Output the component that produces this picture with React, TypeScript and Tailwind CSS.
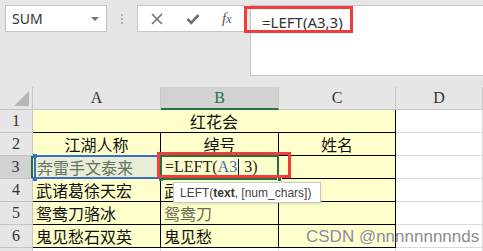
import React from 'react'

const cjk = '"Noto Sans CJK SC", "Noto Sans", sans-serif'
const serif = '"Liberation Serif", serif'

const hdr = 'bg-[#e6e6e6] border-r border-b border-[#c6c6c6] flex items-center justify-center text-[16px] text-[#333]'
const yel = 'bg-[#ffffcc] border-r border-b border-black flex items-center text-[16px] text-[#111]'
const blank = 'bg-white border-r border-b border-[#d9d9d9]'

function RowHead({ n, active }: { n?: number; active?: boolean }) {
  return (
    <div
      className={active
        ? 'bg-[#d2d2d2] border-r-2 border-r-[#217346] border-b border-b-[#c6c6c6] flex items-center justify-center text-[16px] text-[#333]'
        : hdr}
      style={{ fontFamily: serif }}
    >
      {n}
    </div>
  )
}

export default function App() {
  return (
    <div className="w-[483px] h-[251px] overflow-hidden relative bg-[#e6e6e6]" style={{ fontFamily: '"Noto Sans", sans-serif' }}>
      {/* formula bar area */}
      <div className="h-[87px] relative flex items-start pt-[5px] pl-[5px]">
        <div className="w-[102px] h-[27px] bg-white border border-[#c6c6c6] flex items-center justify-between pl-[6px] pr-[7px]">
          <span className="text-[14px] text-[#333]">SUM</span>
          <span className="w-0 h-0 border-l-[4px] border-r-[4px] border-t-[4px] border-l-transparent border-r-transparent border-t-[#777]" />
        </div>
        <div className="w-[30px] h-[27px] flex flex-col items-center justify-center gap-[2px]">
          <span className="w-[2px] h-[2px] bg-[#b0b0b0]" />
          <span className="w-[2px] h-[2px] bg-[#b0b0b0]" />
          <span className="w-[2px] h-[2px] bg-[#b0b0b0]" />
        </div>
        <div className="w-[108px] h-[27px] bg-white border border-[#c6c6c6] flex items-center pl-[12px] gap-[22px]">
          <svg width="14" height="14" viewBox="0 0 14 14">
            <path d="M2 2 L12 12 M12 2 L2 12" stroke="#6f6f6f" strokeWidth="1.6" />
          </svg>
          <svg width="14" height="14" viewBox="0 0 14 14">
            <path d="M1.5 7 L5.2 10.8 L12.5 3" stroke="#6f6f6f" strokeWidth="2.6" fill="none" />
          </svg>
          <span className="text-[15px] italic text-[#555]" style={{ fontFamily: serif }}>
            f<span className="text-[12px]">x</span>
          </span>
        </div>
        <div className="ml-[5px] flex-1 h-[71px] bg-white border-t border-l border-b border-[#c6c6c6] pl-[11px] pt-[4px]">
          <span className="text-[15px] text-[#333]">=LEFT(A3,3)</span>
        </div>
        <div className="absolute left-[244px] top-[6px] w-[109px] h-[27px] border-[3px] border-[#f23b3b]" />
      </div>

      {/* sheet */}
      <div className="grid grid-cols-[33px_128px_118px_117px_87px] auto-rows-[23px]" style={{ fontFamily: serif }}>
        {/* column header */}
        <div className={hdr + ' relative'}>
          <svg className="absolute right-[3px] bottom-[3px]" width="15" height="15" viewBox="0 0 15 15">
            <path d="M15 0 L15 15 L0 15 Z" fill="#b6b6b6" />
          </svg>
        </div>
        <div className={hdr}>A</div>
        <div className="bg-[#d2d2d2] border-r border-r-[#c6c6c6] border-b-2 border-b-[#217346] flex items-center justify-center text-[16px] text-[#217346]">B</div>
        <div className={hdr}>C</div>
        <div className={hdr}>D</div>

        {/* row 1 */}
        <RowHead n={1} />
        <div className={yel + ' col-span-3 justify-center'} style={{ fontFamily: cjk }}>红花会</div>
        <div className={blank} />

        {/* row 2 */}
        <RowHead n={2} />
        <div className={yel + ' justify-center'} style={{ fontFamily: cjk }}>江湖人称</div>
        <div className={yel + ' justify-center'} style={{ fontFamily: cjk }}>绰号</div>
        <div className={yel + ' justify-center'} style={{ fontFamily: cjk }}>姓名</div>
        <div className={blank} />

        {/* row 3 */}
        <RowHead n={3} active />
        <div className="bg-[#e8edd8] border-r border-b border-black flex items-center relative">
          <div className="absolute left-[1px] top-[-1px] right-[-1px] bottom-[-1px] border-2 border-[#3b6fc4]" />
          <span className="absolute left-0 top-[-2px] w-[4px] h-[4px] bg-[#3b6fc4]" />
          <span className="absolute right-[-3px] top-[-2px] w-[4px] h-[4px] bg-[#3b6fc4]" />
          <span className="absolute left-0 bottom-[-3px] w-[4px] h-[4px] bg-[#3b6fc4]" />
          <span className="absolute right-[-3px] bottom-[-3px] w-[4px] h-[4px] bg-[#3b6fc4]" />
          <span className="pl-[4px] text-[16px] text-[#66735f]" style={{ fontFamily: cjk }}>奔雷手文泰来</span>
        </div>
        <div className="bg-[#ffffcc] border-r border-b border-black flex items-center relative">
          <div className="absolute left-[-1px] top-[-1px] right-[-1px] bottom-[-2px] border-2 border-[#217346]" />
          <span className="absolute right-[-4px] bottom-[-4px] w-[5px] h-[5px] bg-[#217346] border border-white" />
          <span className="pl-[4px] text-[16px] text-[#222] flex items-center whitespace-pre">
            =LEFT(<span className="text-[#3b6fc4]">A3</span>
            <span className="inline-block w-px h-[17px] bg-black mx-[1px]" />
            {' 3)'}
          </span>
          <div className="absolute left-[-4px] top-[-4px] w-[134px] h-[26px] border-[3px] border-[#f23b3b]" />
        </div>
        <div className={yel} />
        <div className={blank} />

        {/* row 4 */}
        <RowHead n={4} />
        <div className={yel} style={{ fontFamily: cjk }}><span className="pl-[3px]">武诸葛徐天宏</span></div>
        <div className={yel} style={{ fontFamily: cjk }}><span className="pl-[3px]">武</span></div>
        <div className={yel} />
        <div className={blank} />

        {/* row 5 */}
        <RowHead n={5} />
        <div className={yel} style={{ fontFamily: cjk }}><span className="pl-[3px]">鸳鸯刀骆冰</span></div>
        <div className={yel} style={{ fontFamily: cjk }}><span className="pl-[3px] text-[#6d6d5a]">鸳鸯刀</span></div>
        <div className={yel} />
        <div className={blank} />

        {/* row 6 */}
        <RowHead n={6} />
        <div className={yel} style={{ fontFamily: cjk }}><span className="pl-[3px]">鬼见愁石双英</span></div>
        <div className={yel} style={{ fontFamily: cjk }}><span className="pl-[3px]">鬼见愁</span></div>
        <div className={yel} />
        <div className={blank} />

        {/* row 7, only a sliver shows */}
        <RowHead />
        <div className={blank} />
        <div className={blank} />
        <div className={blank} />
        <div className={blank} />
      </div>

      {/* function tooltip */}
      <div className="absolute left-[173px] top-[182px] w-[148px] h-[21px] bg-white border border-[#c8c8c8] shadow-sm flex items-center pl-[6px] text-[12px] text-[#444] whitespace-nowrap" style={{ fontFamily: '"Liberation Sans", sans-serif' }}>
        LEFT(<b className="text-[#333]">text</b>, [num_chars])
      </div>

      {/* watermark */}
      <div className="absolute left-[306px] top-[224px] text-[17px] text-[#8c8c8c] whitespace-nowrap" style={{ fontFamily: '"Liberation Sans", sans-serif', textShadow: '1px 1px 0 #fff' }}>
        CSDN @nnnnnnnnnds
      </div>
    </div>
  )
}
